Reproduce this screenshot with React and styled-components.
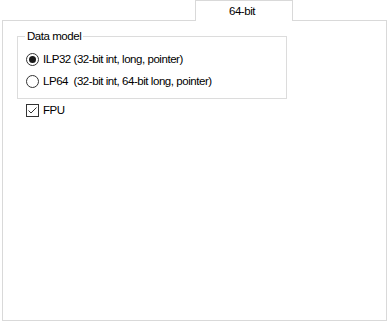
import React from "react";
import styled, { createGlobalStyle } from "styled-components";

const Global = createGlobalStyle`
  html, body { margin: 0; padding: 0; background: #ffffff; }
  body { font-family: "Liberation Sans", Arial, sans-serif; font-size: 11.5px; color: #000; }
  #root { width: 388px; height: 321px; }
`;

const Window = styled.div`
  width: 388px;
  height: 321px;
  display: flex;
  flex-direction: column;
  background: #ffffff;
  overflow: hidden;
`;

const TabStrip = styled.div`
  display: flex;
  height: 20px;
  padding-left: 195px;
  position: relative;
  z-index: 1;
`;

const Tab = styled.div`
  width: 98px;
  height: 21px;
  box-sizing: border-box;
  border: 1px solid #d9d9d9;
  border-bottom: none;
  background: #ffffff;
  display: flex;
  align-items: center;
  justify-content: center;
  padding-right: 4px;
  letter-spacing: -0.45px;
`;

const Panel = styled.div`
  flex: 1;
  margin: 0 1px 0 2px;
  border: 1px solid #d9d9d9;
  display: flex;
  flex-direction: column;
  align-items: flex-start;
  padding-left: 14px;
`;

const GroupBox = styled.fieldset`
  margin: 9px 0 0 0;
  width: 270px;
  box-sizing: border-box;
  border: 1px solid #dcdcdc;
  padding: 6px 0 6px 8px;
  display: flex;
  flex-direction: column;
`;

const Legend = styled.legend`
  padding: 0 2px;
  margin-left: -1px;
  line-height: 12px;
  letter-spacing: -0.45px;
`;

const OptionRow = styled.label`
  display: flex;
  align-items: center;
  height: 22px;
  gap: 4px;
  letter-spacing: -0.45px;
  white-space: pre;
`;

const RadioMark = styled.span`
  width: 13px;
  height: 13px;
  box-sizing: border-box;
  border-radius: 50%;
  border: 1px solid #333333;
  display: flex;
  align-items: center;
  justify-content: center;
  flex: none;
  &::after {
    content: "";
    width: 7px;
    height: 7px;
    border-radius: 50%;
    background: ${(p) => (p.$checked ? "#1a1a1a" : "transparent")};
  }
`;

const CheckRow = styled(OptionRow)`
  height: 20px;
  margin-left: 9px;
  margin-top: 1px;
`;

const CheckBox = styled.span`
  width: 13px;
  height: 13px;
  box-sizing: border-box;
  border: 1px solid #333333;
  display: flex;
  flex: none;
`;

export default function App() {
  return (
    <Window>
      <Global />
      <TabStrip>
        <Tab>64-bit</Tab>
      </TabStrip>
      <Panel>
        <GroupBox>
          <Legend>Data model</Legend>
          <OptionRow>
            <RadioMark $checked />
            ILP32 (32-bit int, long, pointer)
          </OptionRow>
          <OptionRow>
            <RadioMark />
            {"LP64  (32-bit int, 64-bit long, pointer)"}
          </OptionRow>
        </GroupBox>
        <CheckRow>
          <CheckBox>
            <svg width="11" height="11" viewBox="0 0 11 11">
              <polyline points="1.5,5.5 4,8 9.5,2.5" fill="none" stroke="#333" strokeWidth="1" />
            </svg>
          </CheckBox>
          FPU
        </CheckRow>
      </Panel>
    </Window>
  );
}
